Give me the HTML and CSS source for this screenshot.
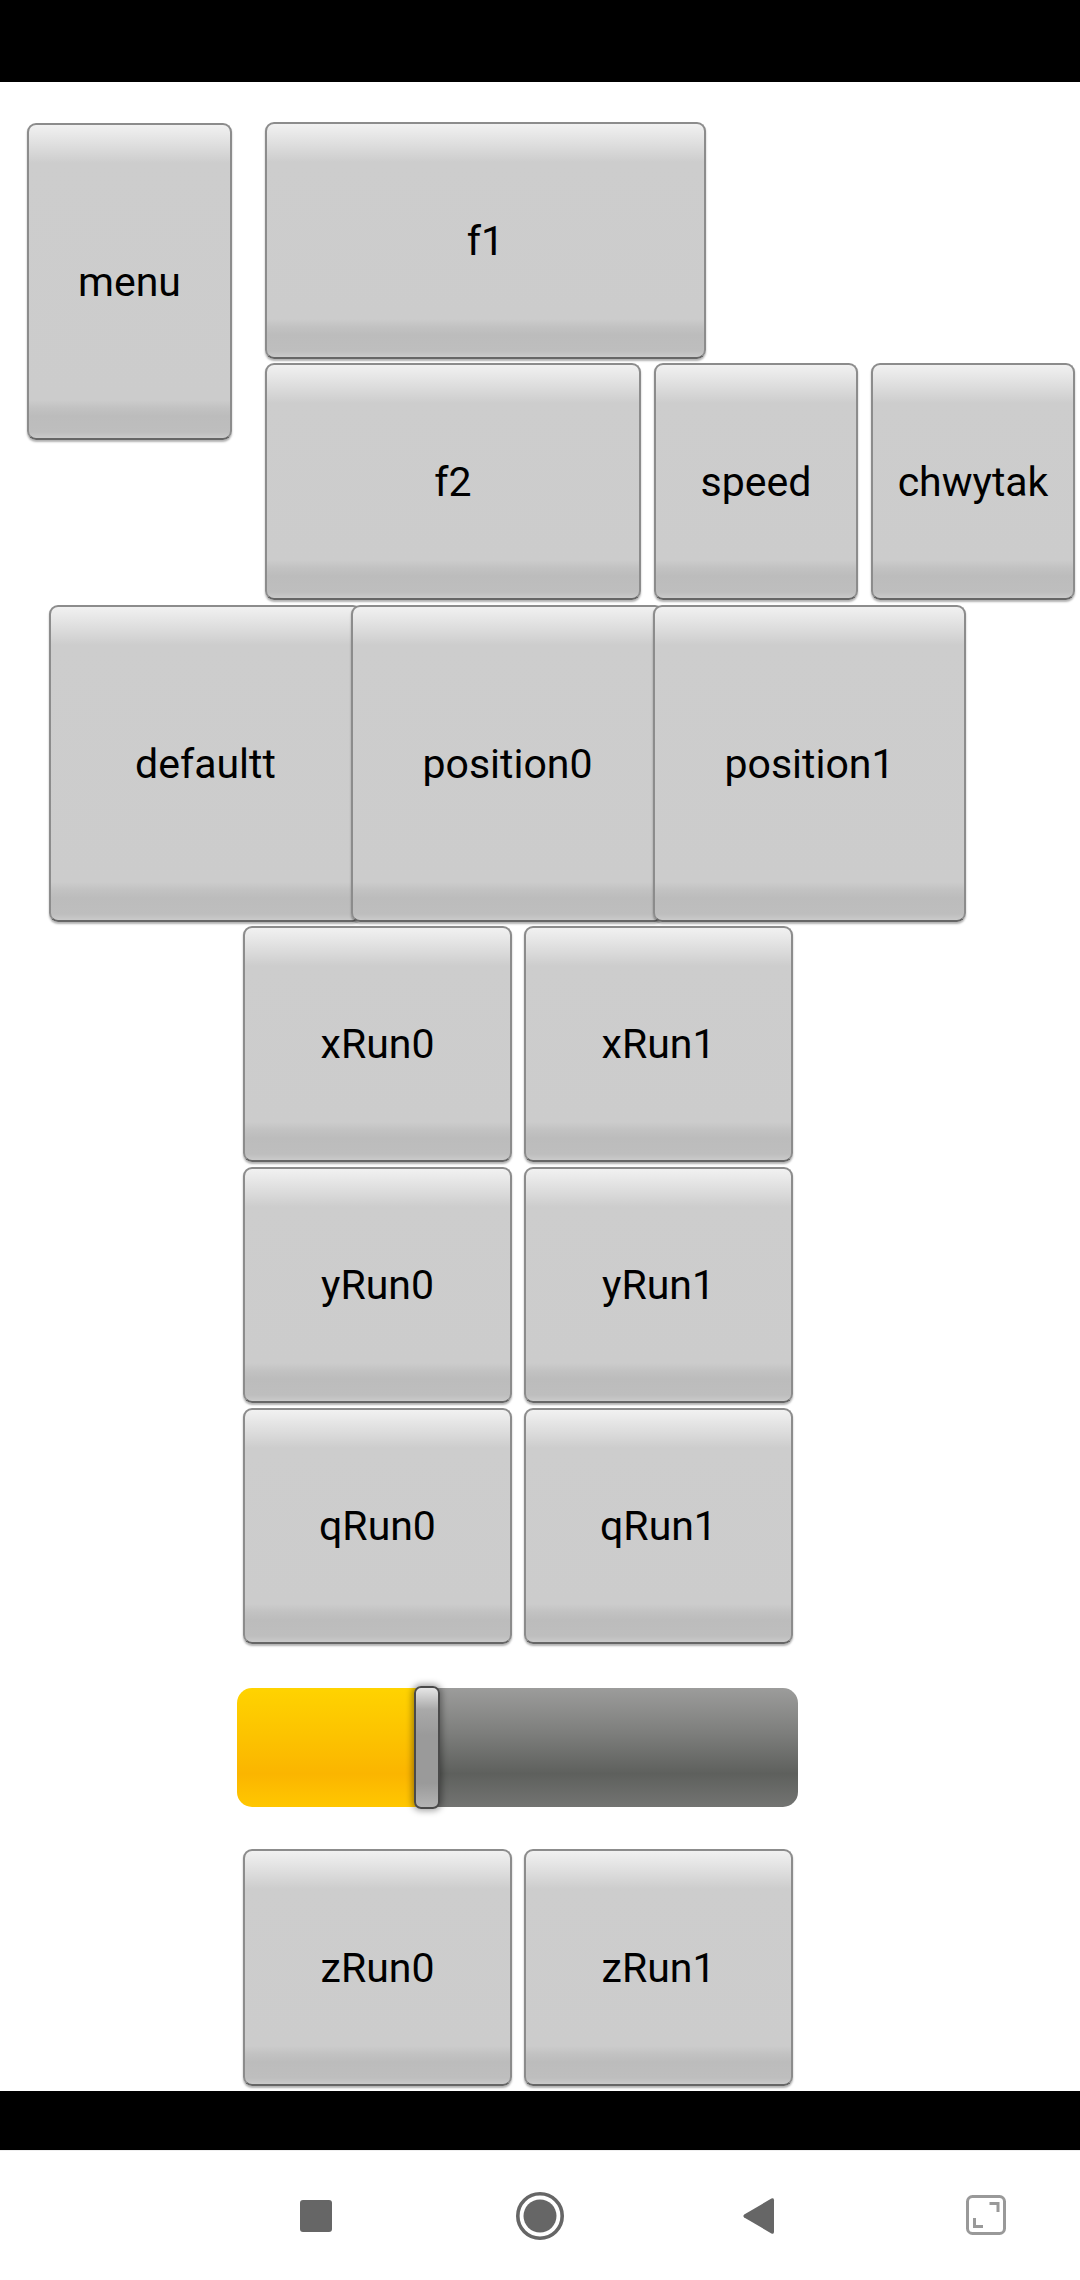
FILE: index.html
```html
<!DOCTYPE html>
<html>
<head>
<meta charset="utf-8">
<link rel="stylesheet" href="styles.css">
</head>
<body>
<div class="statusbar"></div>
<main class="screen">
  <section class="top">
    <div class="btn menu">menu</div>
    <div class="topright">
      <div class="btn f1">f1</div>
      <div class="row2">
        <div class="btn f2">f2</div>
        <div class="btn small">speed</div>
        <div class="btn small">chwytak</div>
      </div>
    </div>
  </section>
  <section class="positions">
    <div class="btn pos">defaultt</div>
    <div class="btn pos over">position0</div>
    <div class="btn pos over">position1</div>
  </section>
  <section class="grid">
    <div class="btn">xRun0</div>
    <div class="btn">xRun1</div>
    <div class="btn">yRun0</div>
    <div class="btn">yRun1</div>
    <div class="btn">qRun0</div>
    <div class="btn">qRun1</div>
  </section>
  <section class="slider">
    <div class="track">
      <div class="fill" style="width: 190px"></div>
      <div class="rest"></div>
    </div>
    <div class="thumb"></div>
  </section>
  <section class="grid zrow">
    <div class="btn">zRun0</div>
    <div class="btn">zRun1</div>
  </section>
</main>
<div class="blackbar"></div>
<nav class="navbar">
  <svg class="navicon" viewBox="0 0 48 48" width="48" height="48"><rect x="8" y="8" width="32" height="32" rx="3" fill="#666"/></svg>
  <svg class="navicon" viewBox="0 0 48 48" width="48" height="48"><circle cx="24" cy="24" r="22.2" fill="none" stroke="#666" stroke-width="3.6"/><circle cx="24" cy="24" r="16.5" fill="#666"/></svg>
  <svg class="navicon" viewBox="0 0 48 48" width="48" height="48"><path d="M4.2 22.4 L31.4 6.6 Q34 5.2 34 8.2 L34 39.8 Q34 42.8 31.4 41.4 L4.2 25.6 Q2.6 24 4.2 22.4 Z" fill="#666"/></svg>
  <svg class="navicon" viewBox="0 0 48 48" width="48" height="48"><rect x="3.5" y="4.5" width="37" height="37" rx="5" fill="none" stroke="#999" stroke-width="3"/><path d="M25.5 11.5 H34 V20" fill="none" stroke="#999" stroke-width="3"/><path d="M10.5 26 V34.5 H19" fill="none" stroke="#999" stroke-width="3"/></svg>
</nav>
</body>
</html>
```
FILE: styles.css
```css
html, body {
  margin: 0;
  padding: 0;
  background: #ffffff;
}

body {
  width: 1080px;
  height: 2280px;
  overflow: hidden;
  font-family: Roboto, "Noto Sans", "Liberation Sans", sans-serif;
}

.statusbar {
  height: 82px;
  background: #000;
}

.screen {
  height: 2009px;
  overflow: hidden;
  background: #fff;
  display: flex;
  flex-direction: column;
}

.btn {
  box-sizing: border-box;
  display: flex;
  align-items: center;
  justify-content: center;
  font-size: 41px;
  color: #000;
  border: 2px solid #8c8c8c;
  border-bottom-color: #666;
  border-radius: 9px;
  background: linear-gradient(to bottom,
    #f1f1f1 0px,
    #e4e4e4 14px,
    #cdcdcd 38px,
    #cccccc calc(100% - 38px),
    #c2c2c2 calc(100% - 30px),
    #bcbcbc calc(100% - 22px),
    #bebebe calc(100% - 6px),
    #cacaca 100%);
  box-shadow: 0 2px 2px rgba(0, 0, 0, 0.3);
}

.top {
  display: flex;
  margin-top: 40px;
}

.menu {
  margin-left: 27px;
  margin-top: 1px;
  width: 205px;
  height: 317px;
}

.topright {
  margin-left: 33px;
  display: flex;
  flex-direction: column;
  gap: 4px;
}

.f1 {
  width: 441px;
  height: 237px;
}

.row2 {
  display: flex;
  height: 237px;
}

.f2 {
  width: 376px;
}

.small {
  width: 204px;
  margin-left: 13px;
}

.positions {
  display: flex;
  margin-top: 5px;
  margin-left: 49px;
  height: 317px;
}

.pos {
  width: 313px;
  flex: none;
}

.pos.over {
  margin-left: -11px;
}

.grid {
  display: grid;
  grid-template-columns: 269px 269px;
  grid-auto-rows: 236px;
  column-gap: 12px;
  row-gap: 5px;
  margin-left: 243px;
  margin-top: 4px;
}

.slider {
  position: relative;
  margin-left: 237px;
  margin-top: 44px;
  width: 561px;
  height: 119px;
}

.track {
  display: flex;
  height: 119px;
  border-radius: 15px;
  overflow: hidden;
}

.fill {
  flex: none;
  background: linear-gradient(to bottom, #ffd300 0%, #fcc300 40%, #fbb500 72%, #ffc700 100%);
}

.rest {
  flex: 1;
  background: linear-gradient(to bottom, #9c9c9b 0%, #7d7e7c 38%, #5e605d 72%, #737472 100%);
}

.thumb {
  position: absolute;
  left: 177px;
  top: -2px;
  width: 26px;
  height: 123px;
  box-sizing: border-box;
  border: 2px solid #4a4a4a;
  border-radius: 7px;
  background: linear-gradient(to bottom, #e6e6e6 0%, #a9a9a9 18%, #9a9a9a 40%, #9a9a9a 80%, #b4b4b4 100%);
  box-shadow: 0 0 6px 2px rgba(0, 0, 0, 0.35);
}

.zrow {
  margin-top: 42px;
  grid-auto-rows: 237px;
}

.blackbar {
  height: 59px;
  background: #000;
}

.navbar {
  height: 130px;
  background: #fff;
  display: flex;
  align-items: center;
  padding-left: 292px;
  gap: 176px;
  border-top: 1px solid #eee;
  box-sizing: border-box;
}

.navicon {
  flex: none;
  display: block;
}
```
